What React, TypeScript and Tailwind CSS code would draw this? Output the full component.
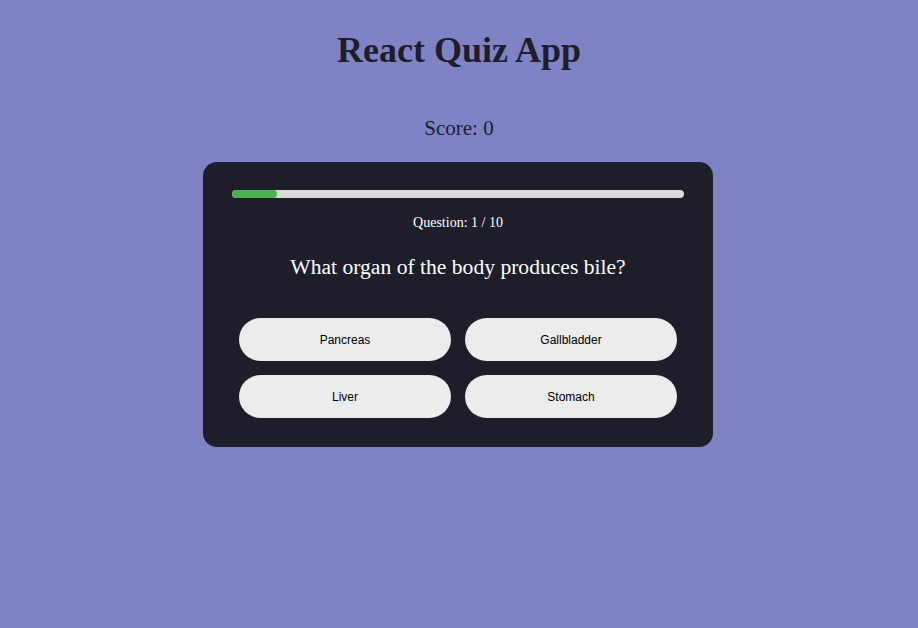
import React from 'react';

const answers = ['Pancreas', 'Gallbladder', 'Liver', 'Stomach'];

export default function App() {
  const current = 1;
  const total = 10;
  const score = 0;

  return (
    <div className="min-h-screen w-full bg-[#7f83c6] flex flex-col items-center font-['Liberation_Serif',serif] text-[#1e1e2a]">
      <h1 className="mt-[27px] text-[36px] font-bold leading-[46px]">React Quiz App</h1>
      <p className="mt-[43px] text-[21px] leading-[24px]">Score: {score}</p>

      <div className="mt-[22px] w-[510px] -translate-x-px rounded-[14px] bg-[#1e1e2a] px-[29px] pt-[28px] pb-[29px]">
        <div className="h-[8px] w-full rounded-full bg-[#d9d9d9] overflow-hidden">
          <div className="h-full rounded-full bg-[#4caf50]" style={{ width: `${(current / total) * 100}%` }} />
        </div>
        <p className="mt-[16px] text-center text-[14px] leading-[18px] text-white">
          Question: {current} / {total}
        </p>
        <h2 className="mt-[22px] text-center text-[21.6px] leading-[26px] text-white">
          What organ of the body produces bile?
        </h2>
        <div className="mt-[38px] grid grid-cols-2 gap-x-[14px] gap-y-[14px] px-[7px]">
          {answers.map((a) => (
            <button
              key={a}
              className="h-[43px] rounded-full bg-[#ececec] text-[12px] text-black font-['Liberation_Sans',Arial,sans-serif]"
            >
              {a}
            </button>
          ))}
        </div>
      </div>
    </div>
  );
}
